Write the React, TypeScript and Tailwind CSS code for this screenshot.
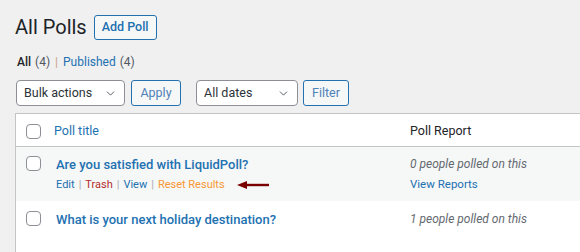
import { ChevronDown } from "lucide-react";

const font = { fontFamily: 'Roboto, "Open Sans", sans-serif' };

function Checkbox() {
  return (
    <span className="block h-[15px] w-[15px] rounded-[4px] border border-[#8c8f94] bg-white" />
  );
}

function SelectBox({ label, width }: { label: string; width: string }) {
  return (
    <div
      className={`flex h-[26px] items-center justify-between rounded-[4px] border border-[#8c8f94] bg-white pl-[7px] pr-[7px] text-[12.5px] text-[#2c3338] ${width}`}
    >
      <span>{label}</span>
      <ChevronDown className="h-[13px] w-[13px] text-[#50575e]" strokeWidth={1.75} />
    </div>
  );
}

function SecondaryButton({ label, width }: { label: string; width: string }) {
  return (
    <button
      className={`flex h-[26px] items-center justify-center rounded-[3px] border border-[#2271b1] bg-[#f6f7f7] text-[12.5px] text-[#4f82b8] ${width}`}
    >
      {label}
    </button>
  );
}

function Arrow() {
  return (
    <svg width="32" height="10" viewBox="0 0 32 10" className="ml-[12px]">
      <polygon points="0,5 10,1 10,9" fill="#7a0000" />
      <rect x="9" y="3.8" width="23" height="2.4" fill="#7a0000" />
    </svg>
  );
}

export default function App() {
  return (
    <div
      className="h-[252px] w-[580px] overflow-hidden bg-[#f0f0f1] text-[12.5px] text-[#3c434a]"
      style={font}
    >
      <div className="flex items-center gap-[7px] pl-[15px] pt-[15px]">
        <h1 className="text-[20px] font-normal leading-[25px] text-[#1d2327]">All Polls</h1>
        <button className="flex h-[25px] items-center rounded-[3px] border border-[#2271b1] bg-[#f6f7f7] px-[7px] text-[12.5px] font-medium text-[#2271b1]">
          Add Poll
        </button>
      </div>

      <div className="mt-[14px] flex items-center pl-[17px] text-[12px] leading-[16px]">
        <span className="font-medium text-[#1d2327]">All</span>
        <span className="ml-[4px] text-[#50575e]">(4)</span>
        <span className="mx-[5px] text-[#c9a08a]">|</span>
        <span className="text-[#2271b1]">Published</span>
        <span className="ml-[4px] text-[#50575e]">(4)</span>
      </div>

      <div className="mt-[10px] flex items-center pl-[16px]">
        <SelectBox label="Bulk actions" width="w-[109px]" />
        <div className="ml-[6px]">
          <SecondaryButton label="Apply" width="w-[50px]" />
        </div>
        <div className="ml-[15px]">
          <SelectBox label="All dates" width="w-[102px]" />
        </div>
        <div className="ml-[5px]">
          <SecondaryButton label="Filter" width="w-[46px]" />
        </div>
      </div>

      <div className="ml-[15px] mt-[7px] w-[600px] border border-[#c3c4c7] bg-white">
        <div className="grid h-[33px] grid-cols-[38px_356px_1fr] items-center border-b border-[#c3c4c7] pt-[2px]">
          <div className="pl-[10px]">
            <Checkbox />
          </div>
          <span className="text-[12.5px] text-[#2271b1]">Poll title</span>
          <span className="text-[12.5px] text-[#1d2327]">Poll Report</span>
        </div>

        <div className="grid h-[54px] grid-cols-[38px_356px_1fr] bg-[#f6f7f7] pt-[9px]">
          <div className="pl-[10px]">
            <Checkbox />
          </div>
          <div className="pl-[2px]">
            <div className="text-[13px] font-medium leading-[17px] text-[#2271b1]">
              Are you satisfied with LiquidPoll?
            </div>
            <div className="mt-[4px] flex items-center text-[11px] leading-[16px]">
              <span className="text-[#2271b1]">Edit</span>
              <span className="mx-[4px] text-[#a7aaad]">|</span>
              <span className="text-[#b32d2e]">Trash</span>
              <span className="mx-[4px] text-[#a7aaad]">|</span>
              <span className="text-[#2271b1]">View</span>
              <span className="mx-[4px] text-[#a7aaad]">|</span>
              <span className="text-[#f69833]">Reset Results</span>
              <Arrow />
            </div>
          </div>
          <div>
            <div className="text-[12px] italic leading-[17px] text-[#646970]">
              0 people polled on this
            </div>
            <div className="mt-[3px] text-[11.5px] leading-[17px] text-[#2271b1]">View Reports</div>
          </div>
        </div>

        <div className="grid h-[60px] grid-cols-[38px_356px_1fr] pt-[10px]">
          <div className="pl-[10px]">
            <Checkbox />
          </div>
          <div className="pl-[2px] text-[13px] font-medium leading-[17px] text-[#2271b1]">
            What is your next holiday destination?
          </div>
          <div className="text-[12px] italic leading-[17px] text-[#646970]">
            1 people polled on this
          </div>
        </div>
      </div>
    </div>
  );
}
